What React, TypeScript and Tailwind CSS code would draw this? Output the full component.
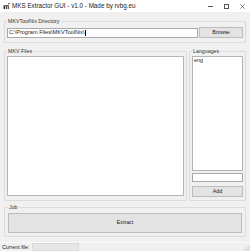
import React from "react";

function Group({ label, className, children }: { label: string; className?: string; children: React.ReactNode }) {
  return (
    <fieldset className={`border border-[#dcdcdc] rounded-[1px] ${className ?? ""}`}>
      <legend className="px-[1px] text-[5.3px] leading-[5px] text-[#333]">{label}</legend>
      {children}
    </fieldset>
  );
}

export default function App() {
  return (
    <div
      className="w-[250px] h-[251px] bg-[#f0f0f0] flex flex-col overflow-hidden text-[#222]"
      style={{ fontFamily: '"Liberation Sans", Arial, sans-serif' }}
    >
      {/* Title bar */}
      <div className="h-[12px] bg-white flex items-center shrink-0">
        <svg width="7" height="6" viewBox="0 0 7 6" className="ml-[3px]">
          <path d="M0.5 6V2.2h1.2v0.6c0.3-0.5 0.7-0.7 1.1-0.7 0.4 0 0.7 0.2 0.9 0.6 0.3-0.4 0.6-0.6 1.1-0.6 0.7 0 1 0.4 1 1.2V6H4.7V3.6c0-0.4-0.1-0.5-0.3-0.5-0.3 0-0.5 0.3-0.5 0.7V6H2.9V3.6c0-0.4-0.1-0.5-0.3-0.5-0.3 0-0.5 0.3-0.5 0.7V6z" fill="#333" />
          <rect x="5.3" y="0" width="1.3" height="1.3" fill="#333" />
        </svg>
        <span className="ml-[2px] text-[6.3px] leading-none text-[#222]">MKS Extractor GUI - v1.0 - Made by rvbg.eu</span>
        <div className="ml-auto flex items-center h-full">
          <div className="w-[16px] h-full flex items-center justify-center">
            <div className="w-[5px] h-[1px] bg-[#555]" />
          </div>
          <div className="w-[16px] h-full flex items-center justify-center">
            <div className="w-[5px] h-[5px] border border-[#555]" />
          </div>
          <div className="w-[16px] h-full flex items-center justify-center">
            <svg width="5" height="5" viewBox="0 0 5 5">
              <path d="M0.3 0.3L4.7 4.7M4.7 0.3L0.3 4.7" stroke="#555" strokeWidth="0.7" />
            </svg>
          </div>
        </div>
      </div>

      {/* Body */}
      <div className="flex-1 flex flex-col px-[4px] text-[5.5px] leading-[5px]">
        <Group label="MKVToolNix Directory" className="mt-[7px] px-[2px] pt-[3px] pb-[4px]">
          <div className="flex items-center gap-[1px]">
            <div className="flex-1 h-[10px] bg-white border border-[#a8a8a8] flex items-center px-[1px] text-[5.6px]">
              C:\Program Files\MKVToolNix\<span className="w-[0.5px] h-[6px] bg-black inline-block" />
            </div>
            <button className="w-[44px] h-[11px] bg-[#e3e3e3] border border-[#bcbcbc] text-[5.3px] leading-none">Browse</button>
          </div>
        </Group>

        <div className="flex gap-[2px] mt-[6px]">
          <Group label="MKV Files" className="flex-1 px-[2px] pt-[2px] pb-[3px]">
            <div className="h-[140px] bg-white border border-[#b4b4b4]" />
          </Group>
          <Group label="Languages" className="w-[57px] px-[2px] pt-[2px] pb-[3px]">
            <div className="h-[115px] bg-white border border-[#b4b4b4] px-[1px] pt-[1px] text-[5.3px]">eng</div>
            <div className="mt-[2px] h-[9px] bg-white border border-[#a8a8a8]" />
            <button className="mt-[4px] w-full h-[11px] bg-[#e3e3e3] border border-[#bcbcbc] text-[5.3px] leading-none">Add</button>
          </Group>
        </div>

        <Group label="Job" className="mt-[4px] px-[3px] pt-[3px] pb-[3px]">
          <button className="w-full h-[20px] bg-[#e3e3e3] border border-[#bcbcbc] text-[5.3px] leading-none">Extract</button>
        </Group>
      </div>

      {/* Status bar */}
      <div className="h-[9px] shrink-0 border-t border-[#f8f8f8] flex items-end text-[5.3px] leading-[5px]">
        <span className="ml-[2px] mb-[1px]">Current file:</span>
        <div className="ml-[3px] w-[47px] h-[8px] bg-[#e6e6e6] border border-[#dadada]" />
        <svg width="6" height="6" viewBox="0 0 6 6" className="ml-auto">
          <rect x="4.5" y="0.5" width="1" height="1" fill="#aaa" />
          <rect x="2.5" y="2.5" width="1" height="1" fill="#aaa" />
          <rect x="4.5" y="2.5" width="1" height="1" fill="#aaa" />
          <rect x="0.5" y="4.5" width="1" height="1" fill="#aaa" />
          <rect x="2.5" y="4.5" width="1" height="1" fill="#aaa" />
          <rect x="4.5" y="4.5" width="1" height="1" fill="#aaa" />
        </svg>
      </div>
    </div>
  );
}
